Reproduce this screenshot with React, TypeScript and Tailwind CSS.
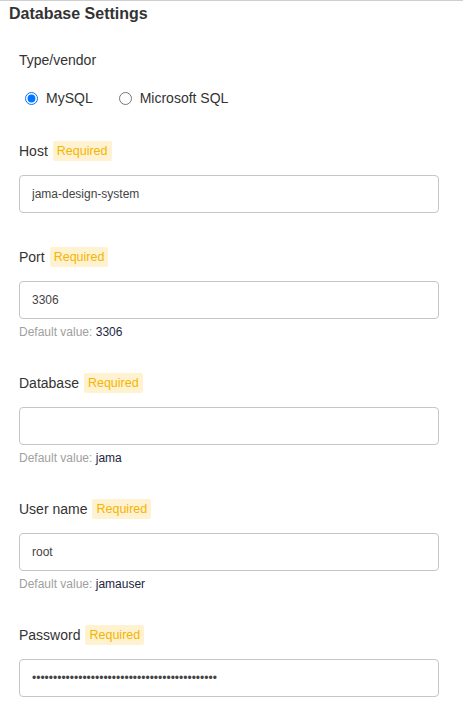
import React from 'react';

const Required: React.FC = () => (
    <span className="ml-[5px] inline-flex h-[20px] items-center rounded-[2px] bg-[#fff2d1] px-[4px] text-[12.5px] text-[#f5b400]">
        Required
    </span>
);

type FieldProps = {
    label: string;
    value?: string;
    type?: string;
    defaultValue?: string;
    first?: boolean;
};

const Field: React.FC<FieldProps> = ({ label, value = '', type = 'text', defaultValue, first }) => (
    <div className={first ? 'mt-[33px]' : 'mt-[34px]'}>
        <div className="flex h-[20px] items-center text-[14px] text-[#333]">
            {label}
            <Required />
        </div>
        <input
            type={type}
            defaultValue={value}
            readOnly
            className="mt-[14px] block h-[38px] w-full rounded-[4px] border border-[#c6c6c6] bg-white px-[12px] text-[12px] text-[#444] outline-none"
        />
        {defaultValue && (
            <p className="mt-[6px] text-[12px] leading-[14px] text-[#a0a0a0]">
                Default value: <span className="text-[#1c2541]">{defaultValue}</span>
            </p>
        )}
    </div>
);

const App: React.FC = () => {
    return (
        <div className="min-h-screen border-t border-[#cfcfcf] bg-white font-['Liberation_Sans',Arial,sans-serif]">
            {/* Header */}
            <h1 className="pl-[9px] pt-[3px] text-[16px] font-bold leading-[20px] text-[#333]">Database Settings</h1>

            <div className="pl-[19px] pr-[24px]">
                {/* Vendor */}
                <p className="mt-[26px] text-[14px] leading-[20px] text-[#333]">Type/vendor</p>
                <div className="mt-[18px] flex h-[20px] items-center text-[14px] text-[#333]">
                    <label className="flex items-center">
                        <input type="radio" name="vendor" defaultChecked className="m-0 ml-[6px] h-[13px] w-[13px]" />
                        <span className="ml-[8px]">MySQL</span>
                    </label>
                    <label className="ml-[26px] flex items-center">
                        <input type="radio" name="vendor" className="m-0 h-[13px] w-[13px]" />
                        <span className="ml-[8px]">Microsoft SQL</span>
                    </label>
                </div>

                <Field first label="Host" value="jama-design-system" />
                <Field label="Port" value="3306" defaultValue="3306" />
                <Field label="Database" defaultValue="jama" />
                <Field label="User name" value="root" defaultValue="jamauser" />
                <Field label="Password" type="password" value={'x'.repeat(44)} />
            </div>
        </div>
    );
};

export default App;
